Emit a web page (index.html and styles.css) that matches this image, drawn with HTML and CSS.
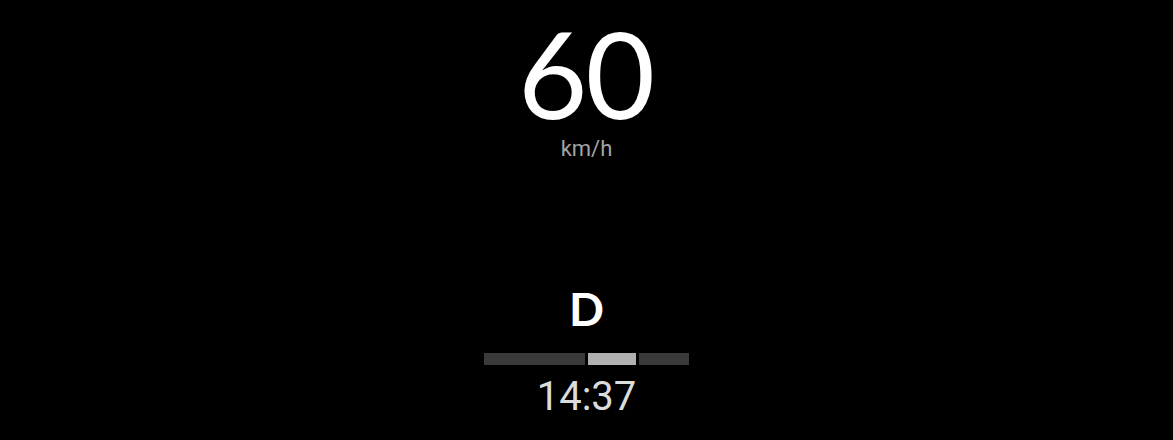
FILE: index.html
```html
<!DOCTYPE html>
<html>
<head>
	<meta charset="utf-8"/>
	<title>HUD</title>
	<link rel="stylesheet" href="styles.css">
</head>
<body>
	<div class="hud">
		<div class="speed">
			<div class="speed-num">60</div>
			<div class="speed-unit">km/h</div>
		</div>
		<div class="gear">
			<div class="gear-letter">D</div>
			<div class="gear-bar">
				<span class="seg seg-a"></span>
				<span class="seg seg-b on"></span>
				<span class="seg seg-c"></span>
			</div>
			<div class="clock">14:37</div>
		</div>
	</div>
</body>
</html>
```

FILE: styles.css
```css
*{margin: 0;padding: 0;box-sizing: border-box;}
html,body{
	width: 100%;
	height: 100%;
	background: #000;
}
body{
	font-family: Lato, Roboto, "Liberation Sans", sans-serif;
	color: #fff;
}
.hud{
	height: 440px;
	display: flex;
	flex-direction: column;
	align-items: center;
}
.speed{
	display: flex;
	flex-direction: column;
	align-items: center;
	padding-top: 21px;
}
.speed-num{
	font-size: 120px;
	line-height: 104px;
	font-weight: 400;
	letter-spacing: -2px;
	margin-right: 2px;
}
.speed-unit{
	font-family: Roboto, "Liberation Sans", sans-serif;
	font-size: 22px;
	line-height: 24px;
	color: #a4a4a4;
	margin-top: 12px;
}
.gear{
	display: flex;
	flex-direction: column;
	align-items: center;
	margin-top: 123px;
}
.gear-letter{
	font-size: 46px;
	line-height: 50px;
	font-weight: 700;
}
.gear-bar{
	display: flex;
	gap: 3px;
	margin-top: 19px;
	height: 12px;
}
.seg{
	display: block;
	background: #3a3a3a;
}
.seg-a{width: 101px;}
.seg-b{width: 48px;}
.seg-c{width: 50px;}
.seg.on{background: #b0b0b0;}
.clock{
	font-family: Roboto, "Liberation Sans", sans-serif;
	font-size: 40px;
	line-height: 44px;
	color: #dcdcdc;
	margin-top: 10px;
}
```
